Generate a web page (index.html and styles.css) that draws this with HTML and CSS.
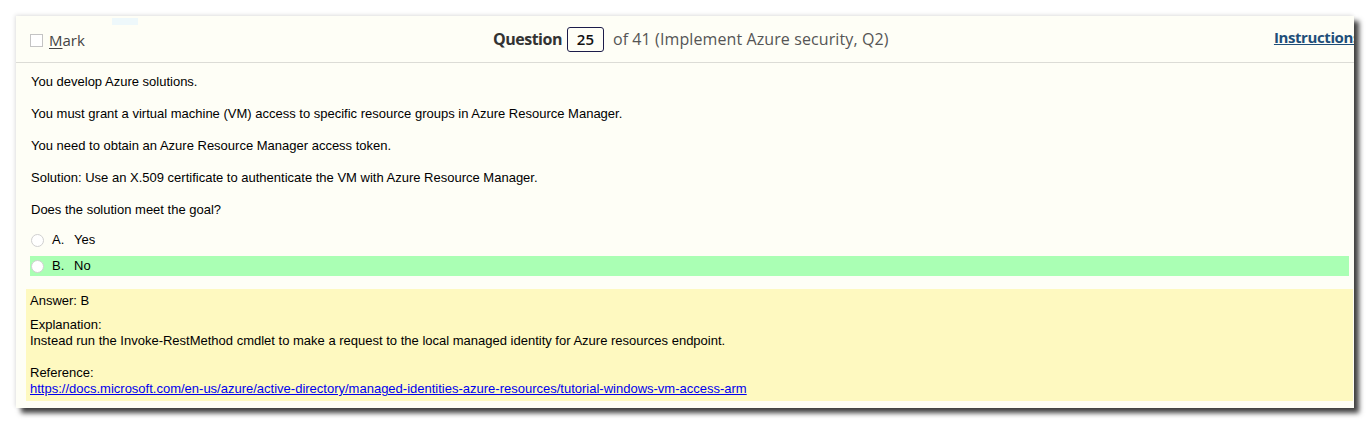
FILE: index.html
```html
<!DOCTYPE html>
<html>
<head>
<meta charset="utf-8">
<link rel="stylesheet" href="styles.css">
</head>
<body>
<div class="window">
  <div class="tab-hint"></div>
  <header class="qhead">
    <label class="mark"><span class="checkbox"></span><span class="mark-text"><u>M</u>ark</span></label>
    <div class="qtitle">
      <span class="q-label">Question</span>
      <span class="q-num">25</span>
      <span class="q-of">of 41 (Implement Azure security, Q2)</span>
    </div>
    <a class="instructions" href="#">Instructions</a>
  </header>
  <main class="content">
    <p>You develop Azure solutions.</p>
    <p>You must grant a virtual machine (VM) access to specific resource groups in Azure Resource Manager.</p>
    <p>You need to obtain an Azure Resource Manager access token.</p>
    <p>Solution: Use an X.509 certificate to authenticate the VM with Azure Resource Manager.</p>
    <p class="last">Does the solution meet the goal?</p>
    <div class="options">
      <div class="option"><span class="radio"></span><span class="opt-letter">A.</span><span>Yes</span></div>
      <div class="option correct"><span class="radio"></span><span class="opt-letter">B.</span><span>No</span></div>
    </div>
    <div class="answer">
      <div class="answer-line">Answer: B</div>
      <div class="explain">Explanation:<br>Instead run the Invoke-RestMethod cmdlet to make a request to the local managed identity for Azure resources endpoint.<br><br>Reference:<br><a href="#">https://docs.microsoft.com/en-us/azure/active-directory/managed-identities-azure-resources/tutorial-windows-vm-access-arm</a></div>
    </div>
  </main>
</div>
</body>
</html>
```

FILE: styles.css
```css
html, body {
  margin: 0;
  padding: 0;
  background: #ffffff;
}
body {
  padding: 16px 0 0 16px;
  width: 1371px;
  height: 425px;
  box-sizing: border-box;
  overflow: hidden;
}
.window {
  position: relative;
  width: 1338px;
  height: 392px;
  background: #fefef6;
  overflow: hidden;
  box-shadow: 5px 5px 5px rgba(0,0,0,0.75), -1px -1px 4px rgba(0,0,0,0.12);
}
.tab-hint {
  position: absolute;
  left: 96px;
  top: 2px;
  width: 26px;
  height: 7px;
  background: #eef8fb;
}
.qhead {
  height: 46px;
  border-bottom: 1px solid #dcdcd6;
  display: flex;
  align-items: center;
  font-family: "Open Sans", "Noto Sans", sans-serif;
  white-space: nowrap;
}
.mark {
  display: flex;
  align-items: center;
  padding-left: 14px;
  width: 463px;
  color: #444;
  font-size: 15px;
  padding-top: 2px;
}
.checkbox {
  width: 11px;
  height: 11px;
  border: 1px solid #c4c4c4;
  background: #fff;
  margin-right: 6px;
}
.mark-text u {
  text-decoration-thickness: 1px;
  text-underline-offset: 2px;
}
.qtitle {
  display: flex;
  align-items: center;
  flex: 1;
  color: #444;
  font-size: 16px;
}
.q-label {
  font-weight: 700;
  color: #333;
  letter-spacing: -0.5px;
}
.q-num {
  display: inline-block;
  border: 1px solid #1c1c4a;
  border-radius: 3px;
  height: 23px;
  line-height: 23px;
  width: 35px;
  text-align: center;
  margin: 0 9px 0 5px;
  font-weight: 600;
  color: #111;
  font-size: 15px;
}
.q-of {
  color: #555;
  letter-spacing: 0.1px;
}
.instructions {
  font-weight: 700;
  font-size: 15px;
  letter-spacing: -0.4px;
  color: #1f4e79;
  text-decoration: underline;
  margin-right: -6px;
  padding-bottom: 4px;
}
.content {
  padding-top: 11px;
  font-family: "Liberation Sans", Arial, sans-serif;
  font-size: 13px;
  line-height: 16px;
  color: #000;
}
.content p {
  margin: 0 0 16px 15px;
}
.content p.last {
  margin-bottom: 12px;
}
.options {
  display: flex;
  flex-direction: column;
  gap: 6px;
  margin-left: 14px;
  margin-right: 5px;
}
.option {
  display: flex;
  align-items: center;
  height: 20px;
}
.option.correct {
  background: #aaffb4;
}
.radio {
  width: 11px;
  height: 11px;
  border: 1px solid #d0d0d0;
  border-radius: 50%;
  background: #fff;
  margin: 0 8px 0 1px;
}
.opt-letter {
  width: 22px;
}
.answer {
  margin: 13px 1px 0 10px;
  background: #fef9c0;
  padding: 4px 4px 4px 4px;
}
.answer-line {
  margin-bottom: 8px;
}
.explain a {
  color: #0000ee;
}
```
